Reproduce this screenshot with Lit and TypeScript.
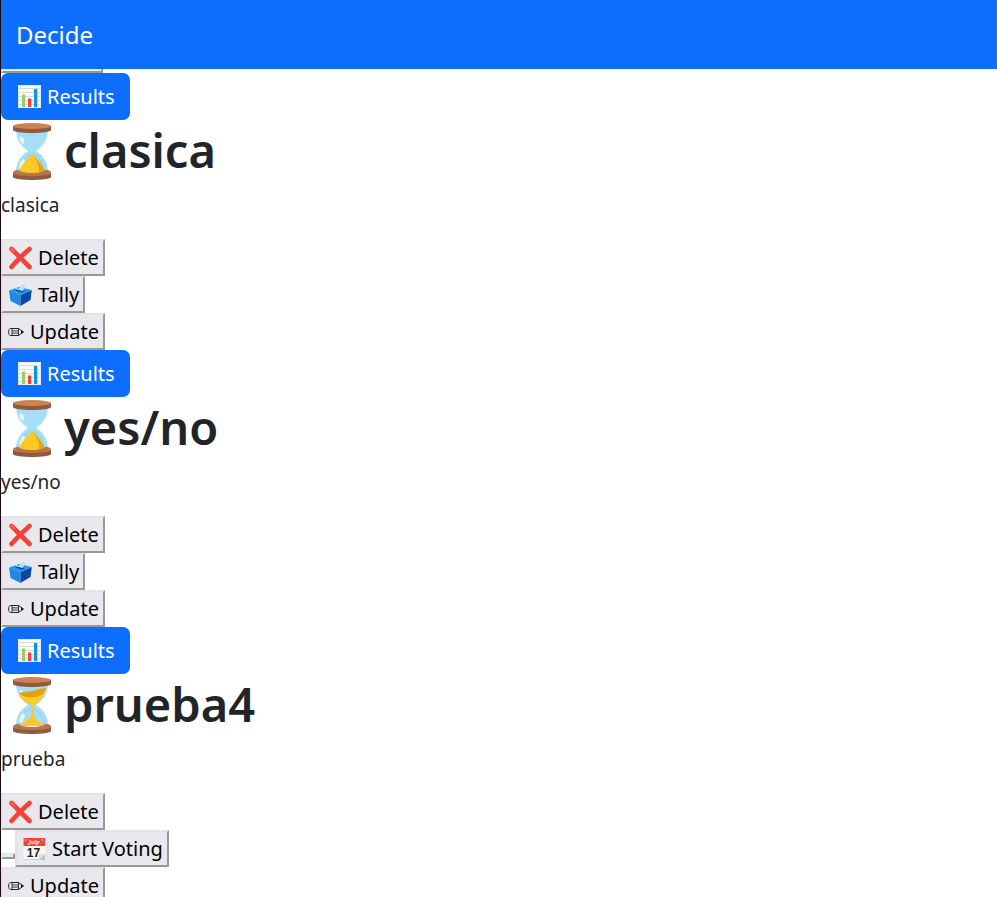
import { LitElement, html, css, svg } from "lit";
import { customElement, property } from "lit/decorators.js";

type IconName = "chart" | "cross" | "ballot" | "pencil" | "calendar" | "done" | "running";

interface Voting {
  name: string;
  description: string;
  started: boolean;
}

const glass = svg`
  <path d="M4 8h32c-1 10-5 15-12 20 7 4 12 11 12 21H4c0-10 5-17 12-21C9 23 5 18 4 8z" fill="#a6def9"/>
  <path d="M8 49c0-8 4-14 10-18M32 49c0-8-4-14-10-18" fill="none" stroke="#81d0f5" stroke-width="1"/>
  <ellipse cx="10" cy="17" rx="2" ry="4" transform="rotate(-20 10 17)" fill="#e3f5fd"/>
  <ellipse cx="10" cy="41" rx="2" ry="5" transform="rotate(22 10 41)" fill="#e3f5fd"/>`;
const caps = svg`
  <path d="M1 3v4c0 4 38 4 38 0V3z" fill="#8f5b3e"/>
  <ellipse cx="20" cy="3" rx="19" ry="3" fill="#cb8353"/>
  <path d="M1 50v4c0 4 38 4 38 0v-4z" fill="#8f5b3e"/>
  <path d="M1 50c0-3 4-3 6-3 2 4 24 4 26 0 3 0 6 0 6 3 0 4-38 4-38 0z" fill="#b9744a"/>`;

const icons = {
  chart: { box: "0 0 24 24", art: svg`
    <path d="M1 0h23v23H1z" fill="#fafcfc"/>
    <path d="M1 3.500h23M1 7.500h23M1 11.500h23M1 15.500h23M1 19.500h23" stroke="#cfdce2"/>
    <path d="M1.500.5h22v22h-22z" fill="none" stroke="#e4ecef"/>
    <path d="M5 9.500h3.200V22H5z" fill="#9ccc65"/>
    <path d="M11 13.500h3.200V22H11z" fill="#f44336"/>
    <path d="M17 4h3.300v18H17z" fill="#0f94dd"/>` },
  cross: { box: "0 0 24 24", art: svg`
    <path d="M3.500 3l18 18M21.500 3C14.500 9 8.500 15 3.500 21" stroke="#f44336" stroke-width="4.600" stroke-linecap="round" fill="none"/>
    <path d="M3 2.500l3 3" stroke="#ff7569" stroke-width="1.500" stroke-linecap="round"/>` },
  ballot: { box: "0 0 24 24", art: svg`
    <path d="M1 7.500L12.500 12v11L2.500 18z" fill="#1e88e5"/>
    <path d="M12.500 12l11.300-5L22.500 17l-10 6z" fill="#0d47a1"/>
    <path d="M1 7.500L11 4l12.800 3-11.300 5z" fill="#2196f3"/>
    <path d="M9 6.500l8 1.500-3 1.500-7-2z" fill="#0d47a1"/>
    <path d="M7.500 4l2.500 2 4-3.500 1-.8 2.500 2-3 4.300-7-2z" fill="#b9def8"/>` },
  pencil: { box: "0 0 16 10", art: svg`
    <path d="M2.500 1.500H10.500L15.500 5l-5 3.500h-8C0 8.500 0 1.500 2.500 1.500z" fill="#fff" fill-opacity=".3" stroke="#222"/>
    <path d="M4 1.500v7M4 3.900h6.500M4 6.100h6.500M10.500 1.500v7" fill="none" stroke="#222" stroke-width=".9"/>
    <path d="M13 3.300L15.600 5 13 6.700z" fill="#111"/>` },
  calendar: { box: "0 0 24 24", art: svg`
    <path d="M1.500 1h21.500v22H1.500z" fill="#f7f7f7"/>
    <path d="M1.500 1h21.500v8H1.500z" fill="#f44336"/>
    <path d="M23 17v6h-6z" fill="#b8c3c8"/>
    <path d="M23 17l-6 1v5z" fill="#d7dee1"/>
    <path d="M1.500 22.500h16" stroke="#c9d1d5"/>
    <circle cx="3.500" cy="3" r="1.200" fill="#82aeb9"/><circle cx="20.500" cy="3" r="1.200" fill="#82aeb9"/>
    <text x="12" y="7" text-anchor="middle" font-size="6" font-weight="700" font-style="italic" fill="#fff">July</text>
    <text x="11.500" y="20" text-anchor="middle" font-family="Liberation Sans, sans-serif" font-size="12" font-weight="700" fill="#212121">17</text>` },
  done: { box: "0 0 40 57", art: svg`${glass}
    <path d="M20 31c4 4 10 10 13 17-4 3-22 3-26 0 3-7 9-13 13-17z" fill="#ffca28"/>
    <path d="M20 31c4 4 10 10 13 17l-6 2c1-7-3-14-7-19z" fill="#e2a610"/>${caps}` },
  running: { box: "0 0 40 57", art: svg`${glass}
    <path d="M7 17c8 2 18 1 27-6-2 9-6 13-12 17v11c2 5 8 6 10 10H8c2-4 8-5 11-10V28C13 25 9 22 7 17z" fill="#ffca28"/>
    <path d="M7 16c6-2 9-1 14-2 5-2 9-3 13-3-2 6-5 8-10 9-7 1-14 0-17-4z" fill="#e0a30e"/>${caps}` },
};

const icon = (name: IconName) => svg`
  <svg class="icon ${name}" viewBox=${icons[name].box} preserveAspectRatio="none" aria-hidden="true">${icons[name].art}</svg>`;

const shared = css`
  .icon { display: block; flex: none; width: 24px; height: 24px; }
  .pencil { width: 16px; height: 10px; }
  .done, .running { width: 40px; height: 57px; }
  .action {
    display: flex;
    align-items: center;
    gap: 6px;
    height: 37px;
    padding: 0 4px 0 5px;
    border: 2px solid;
    border-color: #e3e3e3 #999 #999 #e3e3e3;
    background: #e9e9ed;
    color: #000;
    font: inherit;
    font-size: 20px;
    line-height: 30px;
    white-space: nowrap;
  }
`;

@customElement("voting-item")
export class VotingItem extends LitElement {
  @property({ attribute: false }) voting!: Voting;

  static styles = [shared, css`
    :host { display: block; }
    .item { display: flex; flex-direction: column; align-items: flex-start; }
    .results {
      display: flex;
      align-items: center;
      gap: 6px;
      height: 47px;
      padding: 0 15px 0 16px;
      border-radius: 7px;
      background: #0d6efd;
      color: #fff;
      font-size: 20px;
      text-decoration: none;
    }
    h1 {
      display: flex;
      align-items: flex-end;
      gap: 12px;
      height: 60px;
      margin: 0 0 10px;
      padding-left: 11px;
      font-size: 47px;
      font-weight: 600;
      line-height: 60px;
    }
    p { margin: 0 0 19px; line-height: 30px; }
    .row { display: flex; align-items: flex-end; }
    .blank {
      width: 14px;
      height: 6px;
      margin-bottom: 8px;
      padding: 0;
      border: 2px solid;
      border-color: #e3e3e3 #999 #999 #e3e3e3;
      background: #e9e9ed;
    }
  `];

  render() {
    const v = this.voting;
    return html`
      <article class="item">
        <a class="results" href="#results">${icon("chart")}Results</a>
        <h1>${icon(v.started ? "done" : "running")}${v.name}</h1>
        <p>${v.description}</p>
        <button class="action" type="button">${icon("cross")}Delete</button>
        ${v.started
          ? html`<button class="action" type="button">${icon("ballot")}Tally</button>`
          : html`<div class="row">
              <button class="blank" type="button" aria-label="Start"></button>
              <button class="action" type="button">${icon("calendar")}Start Voting</button>
            </div>`}
        <button class="action" type="button">${icon("pencil")}Update</button>
      </article>`;
  }
}

@customElement("app-root")
export class AppRoot extends LitElement {
  private votings: Voting[] = [
    { name: "clasica", description: "clasica", started: true },
    { name: "yes/no", description: "yes/no", started: true },
    { name: "prueba4", description: "prueba", started: false },
  ];

  static styles = [shared, css`
    :host {
      display: block;
      box-sizing: border-box;
      height: 100vh;
      overflow: auto;
      scrollbar-width: none;
      border-left: 1px solid #1c0a18;
      background: #fff;
      color: #212529;
      font: 19px/30px "Noto Sans", sans-serif;
    }
    .bar {
      position: sticky;
      top: 0;
      z-index: 1;
      display: flex;
      align-items: center;
      height: 69px;
      padding: 0 15px;
      background: #0d6efd;
    }
    .brand { color: #fff; font-size: 24px; text-decoration: none; }
    main { margin-top: -33px; }
    .previous { width: 102px; }
  `];

  render() {
    return html`
      <nav class="bar"><a class="brand" href="#home">Decide</a></nav>
      <main>
        <button class="action previous" type="button" aria-label="Update"></button>
        ${this.votings.map((v) => html`<voting-item .voting=${v}></voting-item>`)}
      </main>`;
  }
}
